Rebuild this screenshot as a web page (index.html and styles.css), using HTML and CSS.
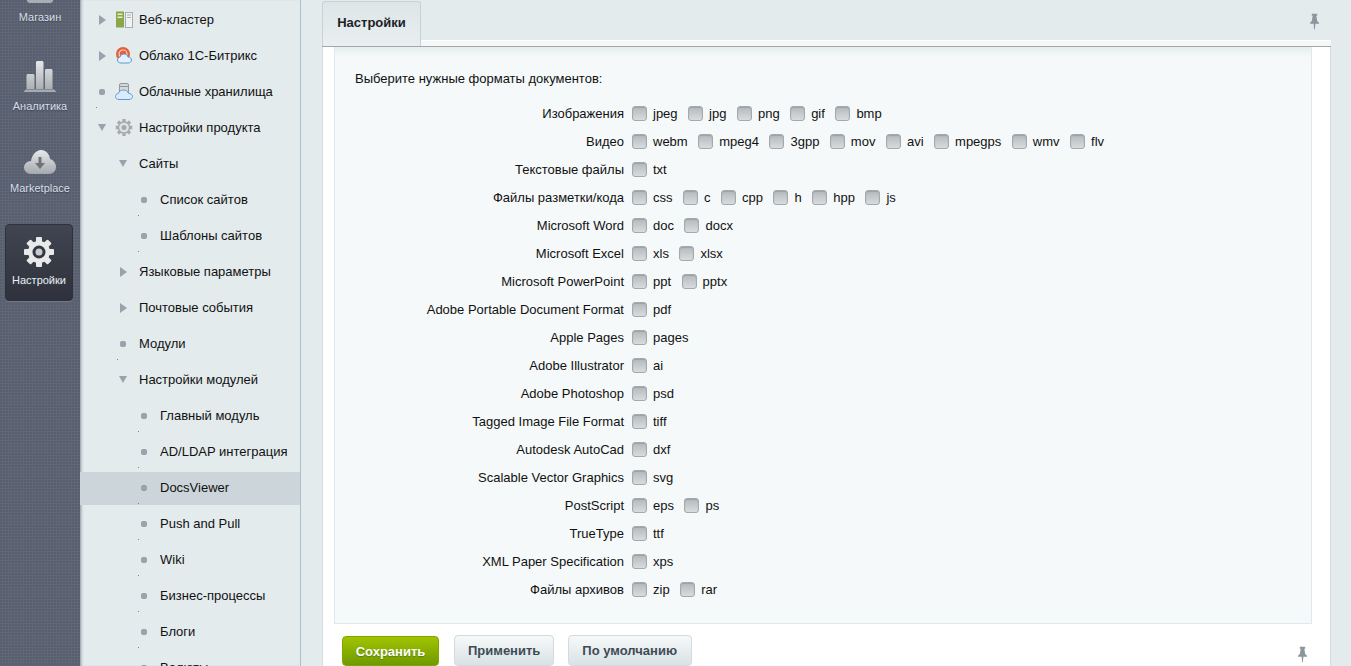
FILE: index.html
```html
<!DOCTYPE html>
<html lang="ru">
<head>
  <meta charset="UTF-8" />
  <title>Настройки - DocsViewer</title>
  <link rel="stylesheet" href="styles.css">
</head>
<body>
  <svg class="defs" width="0" height="0" aria-hidden="true">
    <defs>
      <linearGradient id="iconGrey" x1="0" y1="0" x2="0" y2="1">
        <stop offset="0" stop-color="#e6e8e9" />
        <stop offset="1" stop-color="#a4a9ae" />
      </linearGradient>
      <symbol id="pin" viewBox="0 0 10 17">
        <path d="M2 0h6v2H7l1 6 2 2v1H6l-.6 6h-.8L4 11H0v-1l2-2 1-6H2z" fill="#8b979c" />
      </symbol>
      <symbol id="gear" viewBox="0 0 30 30">
        <g fill="currentColor">
          <rect x="12" y="0" width="6" height="30" rx="1" />
          <rect x="12" y="0" width="6" height="30" rx="1" transform="rotate(45 15 15)" />
          <rect x="12" y="0" width="6" height="30" rx="1" transform="rotate(90 15 15)" />
          <rect x="12" y="0" width="6" height="30" rx="1" transform="rotate(135 15 15)" />
          <circle cx="15" cy="15" r="11" />
        </g>
      </symbol>
    </defs>
  </svg>

  <div class="layout">
    <aside class="sidebar">
      <a class="nav-item">
        <svg class="nav-shop" viewBox="0 0 26 3"><path d="M0 0h26c0 2-1 3-3 3H3C1 3 0 2 0 0z" fill="#a9aeb3" /></svg>
        <span>Магазин</span>
      </a>
      <a class="nav-item">
        <svg class="nav-chart" viewBox="0 0 32 31">
          <path d="M2.500 14.500c0-.8.600-1.500 1.500-1.500h5c.8 0 1.500.7 1.500 1.500V28h-8zM12 1.500c0-.8.600-1.500 1.500-1.500h4.500c.8 0 1.500.7 1.500 1.500V28H12zM21 9.500c0-.8.600-1.500 1.500-1.500H27c.8 0 1.500.7 1.500 1.500V28H21zM2 28.500h28l1.800 1.500c.4.500.2 1-.3 1H.5c-.5 0-.7-.5-.3-1z" fill="url(#iconGrey)" />
        </svg>
        <span>Аналитика</span>
      </a>
      <a class="nav-item">
        <svg class="nav-cloud" viewBox="0 0 32 24">
          <path d="M7 24C3 24 0 21 0 17.500S3 11 7 11C8 5 12 0 17 0c5 0 8.500 4 9 9 3.500 1 6 4 6 8 0 4-3 7-7 7z" fill="url(#iconGrey)" />
          <path d="M14.500 7h3v6H21l-5 6-5-6h3.500z" fill="#6f747b" />
        </svg>
        <span>Marketplace</span>
      </a>
      <a class="nav-item nav-active">
        <svg class="nav-gear" viewBox="0 0 30 30"><use href="#gear" width="30" height="30" /><circle cx="15" cy="15" r="6.500" fill="#343743" /><circle cx="15" cy="15" r="3.500" fill="#c9ccce" /></svg>
        <span>Настройки</span>
      </a>
    </aside>

    <nav class="menu">
      <div class="menu-row lvl1"><i class="arrow-r"></i>
        <svg class="menu-icon" viewBox="0 0 18 16">
          <rect x="1" y="0" width="8" height="16" fill="#8aa84a" />
          <rect x="2.500" y="2" width="5" height="1.500" fill="#e4efc8" />
          <rect x="2.500" y="5" width="5" height="1.500" fill="#e4efc8" />
          <rect x="10.500" y="1" width="7" height="15" fill="#f1f3f3" stroke="#a6adb0" />
          <rect x="12" y="3" width="4" height="1" fill="#a6adb0" />
          <rect x="12" y="5.500" width="4" height="1" fill="#a6adb0" />
        </svg>
        <span>Веб-кластер</span></div>
      <div class="menu-row lvl1"><i class="arrow-r"></i>
        <svg class="menu-icon" viewBox="0 0 18 17">
          <circle cx="8" cy="7" r="7" fill="#e2603c" />
          <circle cx="8" cy="7" r="4" fill="none" stroke="#f6d6ca" stroke-width="1.200" />
          <path d="M6 16c-2.500 0-3.500-1.500-3.500-3s1-2.800 2.600-3c.5-2 2-3 3.900-3 2 0 3.500 1.200 4 3 2 0 3.500 1.300 3.500 3s-1.300 3-3.500 3z" fill="#e4f0fb" stroke="#5b9ad6" />
        </svg>
        <span>Облако 1С-Битрикс</span></div>
      <div class="menu-row lvl1 leaf"><i class="bullet"></i>
        <svg class="menu-icon" viewBox="0 0 18 17">
          <rect x="4.500" y="0.500" width="9" height="10" rx="1.500" fill="#d5d9db" stroke="#8f979b" />
          <rect x="5" y="3" width="8" height="1" fill="#8f979b" />
          <path d="M4 16.500c-2.300 0-3.500-1.500-3.500-3s1-2.800 2.800-3c.6-2 2.700-3.500 5.200-3.500s4.600 1.300 5.200 3.500c2 0 3.800 1.300 3.800 3s-1.500 3-3.500 3z" fill="#dcebf9" stroke="#5b9ad6" />
        </svg>
        <span>Облачные хранилища</span></div>
      <div class="menu-row lvl1"><i class="arrow-d"></i>
        <svg class="menu-icon menu-gear" viewBox="0 0 30 30"><use href="#gear" width="30" height="30" /><circle cx="15" cy="15" r="8.500" fill="#dfe3e4" /><circle cx="15" cy="15" r="4.500" fill="#a5abaf" /></svg>
        <span>Настройки продукта</span></div>
      <div class="menu-row lvl2"><i class="arrow-d"></i><span>Сайты</span></div>
      <div class="menu-row lvl3 leaf"><i class="bullet"></i><span>Список сайтов</span></div>
      <div class="menu-row lvl3 leaf"><i class="bullet"></i><span>Шаблоны сайтов</span></div>
      <div class="menu-row lvl2"><i class="arrow-r"></i><span>Языковые параметры</span></div>
      <div class="menu-row lvl2"><i class="arrow-r"></i><span>Почтовые события</span></div>
      <div class="menu-row lvl2 leaf"><i class="bullet"></i><span>Модули</span></div>
      <div class="menu-row lvl2"><i class="arrow-d"></i><span>Настройки модулей</span></div>
      <div class="menu-row lvl3 leaf"><i class="bullet"></i><span>Главный модуль</span></div>
      <div class="menu-row lvl3 leaf"><i class="bullet"></i><span>AD/LDAP интеграция</span></div>
      <div class="menu-row lvl3 leaf selected"><i class="bullet"></i><span>DocsViewer</span></div>
      <div class="menu-row lvl3 leaf"><i class="bullet"></i><span>Push and Pull</span></div>
      <div class="menu-row lvl3 leaf"><i class="bullet"></i><span>Wiki</span></div>
      <div class="menu-row lvl3 leaf"><i class="bullet"></i><span>Бизнес-процессы</span></div>
      <div class="menu-row lvl3 leaf"><i class="bullet"></i><span>Блоги</span></div>
      <div class="menu-row lvl3 leaf"><i class="bullet"></i><span>Валюты</span></div>
    </nav>

    <main class="main">
      <div class="tabs">
        <div class="tab">Настройки</div>
        <svg class="pin"><use href="#pin" /></svg>
      </div>
      <div class="panel">
        <div class="formats">
          <p class="formats-title">Выберите нужные форматы документов:</p>

          <div class="row"><div class="row-label">Изображения</div><div class="opts">
            <label class="opt"><i class="check"></i>jpeg</label><label class="opt"><i class="check"></i>jpg</label><label class="opt"><i class="check"></i>png</label><label class="opt"><i class="check"></i>gif</label><label class="opt"><i class="check"></i>bmp</label>
          </div></div>
          <div class="row"><div class="row-label">Видео</div><div class="opts">
            <label class="opt"><i class="check"></i>webm</label><label class="opt"><i class="check"></i>mpeg4</label><label class="opt"><i class="check"></i>3gpp</label><label class="opt"><i class="check"></i>mov</label><label class="opt"><i class="check"></i>avi</label><label class="opt"><i class="check"></i>mpegps</label><label class="opt"><i class="check"></i>wmv</label><label class="opt"><i class="check"></i>flv</label>
          </div></div>
          <div class="row"><div class="row-label">Текстовые файлы</div><div class="opts">
            <label class="opt"><i class="check"></i>txt</label>
          </div></div>
          <div class="row"><div class="row-label">Файлы разметки/кода</div><div class="opts">
            <label class="opt"><i class="check"></i>css</label><label class="opt"><i class="check"></i>c</label><label class="opt"><i class="check"></i>cpp</label><label class="opt"><i class="check"></i>h</label><label class="opt"><i class="check"></i>hpp</label><label class="opt"><i class="check"></i>js</label>
          </div></div>
          <div class="row"><div class="row-label">Microsoft Word</div><div class="opts">
            <label class="opt"><i class="check"></i>doc</label><label class="opt"><i class="check"></i>docx</label>
          </div></div>
          <div class="row"><div class="row-label">Microsoft Excel</div><div class="opts">
            <label class="opt"><i class="check"></i>xls</label><label class="opt"><i class="check"></i>xlsx</label>
          </div></div>
          <div class="row"><div class="row-label">Microsoft PowerPoint</div><div class="opts">
            <label class="opt"><i class="check"></i>ppt</label><label class="opt"><i class="check"></i>pptx</label>
          </div></div>
          <div class="row"><div class="row-label">Adobe Portable Document Format</div><div class="opts">
            <label class="opt"><i class="check"></i>pdf</label>
          </div></div>
          <div class="row"><div class="row-label">Apple Pages</div><div class="opts">
            <label class="opt"><i class="check"></i>pages</label>
          </div></div>
          <div class="row"><div class="row-label">Adobe Illustrator</div><div class="opts">
            <label class="opt"><i class="check"></i>ai</label>
          </div></div>
          <div class="row"><div class="row-label">Adobe Photoshop</div><div class="opts">
            <label class="opt"><i class="check"></i>psd</label>
          </div></div>
          <div class="row"><div class="row-label">Tagged Image File Format</div><div class="opts">
            <label class="opt"><i class="check"></i>tiff</label>
          </div></div>
          <div class="row"><div class="row-label">Autodesk AutoCad</div><div class="opts">
            <label class="opt"><i class="check"></i>dxf</label>
          </div></div>
          <div class="row"><div class="row-label">Scalable Vector Graphics</div><div class="opts">
            <label class="opt"><i class="check"></i>svg</label>
          </div></div>
          <div class="row"><div class="row-label">PostScript</div><div class="opts">
            <label class="opt"><i class="check"></i>eps</label><label class="opt"><i class="check"></i>ps</label>
          </div></div>
          <div class="row"><div class="row-label">TrueType</div><div class="opts">
            <label class="opt"><i class="check"></i>ttf</label>
          </div></div>
          <div class="row"><div class="row-label">XML Paper Specification</div><div class="opts">
            <label class="opt"><i class="check"></i>xps</label>
          </div></div>
          <div class="row"><div class="row-label">Файлы архивов</div><div class="opts">
            <label class="opt"><i class="check"></i>zip</label><label class="opt"><i class="check"></i>rar</label>
          </div></div>
        </div>

        <div class="actions">
          <button class="btn btn-save">Сохранить</button>
          <button class="btn">Применить</button>
          <button class="btn btn-default">По умолчанию</button>
          <svg class="pin pin-bottom"><use href="#pin" /></svg>
        </div>
      </div>
    </main>
  </div>
</body>
</html>
```

FILE: styles.css
```css
html, body {
  margin: 0;
  padding: 0;
  height: 100%;
  overflow: hidden;
}

body {
  font-family: "Liberation Sans", Arial, sans-serif;
  font-size: 13px;
  color: #111;
  background: #e3ebed;
}

.defs { position: absolute; }

.layout {
  display: flex;
  height: 666px;
  overflow: hidden;
}

/* left dark column */
.sidebar {
  width: 80px;
  flex: none;
  display: flex;
  flex-direction: column;
  align-items: center;
  gap: 38px;
  background-color: #5f6676;
  background-image: radial-gradient(circle at 1px 1px, #585e6d 1px, transparent 1px);
  background-size: 3px 3px;
}

.nav-item {
  display: flex;
  flex-direction: column;
  align-items: center;
  gap: 8px;
  font-size: 11px;
  line-height: 12px;
  color: #d5dfe8;
  text-shadow: 0 1px 1px #3f4450;
}

.nav-item svg { display: block; }
.nav-shop { width: 26px; height: 3px; }
.nav-chart { width: 32px; height: 31px; }
.nav-cloud { width: 32px; height: 24px; }
.nav-gear { width: 30px; height: 30px; color: #e8eaea; }

.nav-active {
  align-self: flex-start;
  width: 68px;
  height: 77px;
  box-sizing: border-box;
  margin: -8px 0 0 5px;
  padding-top: 12px;
  gap: 7px;
  border: 1px solid #2f323c;
  border-radius: 4px;
  background: linear-gradient(#414551, #2f323c);
  color: #e8eef3;
  box-shadow: 0 1px 0 #6f7685;
}

/* tree menu */
.menu {
  width: 220px;
  flex: none;
  box-sizing: border-box;
  padding-top: 4px;
  display: flex;
  flex-direction: column;
  gap: 3px;
  background: #e3ebed;
  box-shadow: inset 3px 0 3px -2px #8a909c;
}

.menu-row {
  height: 33px;
  flex: none;
  box-sizing: border-box;
  padding-bottom: 2px;
  display: flex;
  align-items: center;
  position: relative;
  color: #111;
}

.menu-row.lvl1 { padding-left: 19px; }
.menu-row.lvl2 { padding-left: 40px; }
.menu-row.lvl3 { padding-left: 61px; }

.menu-row > span { margin-left: 12px; }
.menu-row > .menu-icon + span { margin-left: 6px; }

.menu-row.selected { background: #ccd5da; }

/* the tiny speck under every leaf row */
.menu-row.leaf::after {
  content: "";
  position: absolute;
  top: 31px;
  width: 1px;
  height: 1px;
  background: #7f8a90;
}
.menu-row.lvl1.leaf::after { left: 16px; }
.menu-row.lvl2.leaf::after { left: 37px; }
.menu-row.lvl3.leaf::after { left: 58px; }

.arrow-r, .arrow-d, .bullet { flex: none; display: block; }

.arrow-r {
  width: 0;
  height: 0;
  border-left: 7px solid #98a3ad;
  border-top: 5px solid transparent;
  border-bottom: 5px solid transparent;
}

.arrow-d {
  width: 0;
  height: 0;
  border-top: 7px solid #98a3ad;
  border-left: 4px solid transparent;
  border-right: 4px solid transparent;
  margin-left: -1px;
}

.bullet {
  width: 6px;
  height: 6px;
  margin-right: 1px;
  border-radius: 2px;
  background: #9aa3ad;
}

.menu-icon {
  flex: none;
  width: 18px;
  height: 17px;
  margin-left: 9px;
}

.menu-gear { color: #a5abaf; }

/* right side */
.main {
  flex: 1;
  min-width: 0;
  padding-left: 21px;
  padding-right: 20px;
  border-left: 1px solid #a9bfd0;
}

.tabs {
  height: 40px;
  padding-top: 1px;
  box-sizing: border-box;
  display: flex;
  align-items: flex-start;
  justify-content: space-between;
}

/* the tab runs down over the light strip, to the grey line */
.tab {
  position: relative;
  z-index: 1;
  flex: none;
  width: 99px;
  height: 45px;
  box-sizing: border-box;
  border: 1px solid #c8d1d5;
  border-bottom: 0;
  border-radius: 3px 3px 0 0;
  background: linear-gradient(#dde5e7, #e9eff0);
  text-align: center;
  font-weight: bold;
  line-height: 42px;
  color: #1c2226;
}

.pin {
  width: 9px;
  height: 17px;
  margin: 12px 12px 0 0;
}

.panel {
  position: relative;
  height: 626px;
  box-sizing: border-box;
  padding: 7px 18px 0 11px;
  background: #fff;
  border-left: 1px solid #d3dcdf;
  border-right: 1px solid #d3dcdf;
}

.panel::before {
  content: "";
  position: absolute;
  left: -1px;
  right: -1px;
  top: 0;
  height: 5px;
  background: #f6f8f8;
  border-top: 1px solid #fff;
  border-bottom: 1px solid #a0a8ab;
}

.formats {
  height: 577px;
  box-sizing: border-box;
  padding: 24px 0 0 20px;
  border: 1px solid #dfe8ec;
  border-top: 0;
  background: linear-gradient(#e6eeee, #f5f9f9 10px);
}

.formats-title {
  margin: 0 0 12px;
  line-height: 16px;
}

.row {
  display: flex;
  align-items: center;
  height: 28px;
}

.row-label {
  width: 269px;
  flex: none;
  text-align: right;
}

.opts {
  display: flex;
  margin-left: 8px;
  gap: 10.500px;
}

.opt {
  display: flex;
  align-items: center;
  gap: 5px;
}

.check {
  display: block;
  width: 13px;
  height: 13px;
  margin: 0 1px 0 0;
  border: 1px solid #a3a9ad;
  border-radius: 3px;
  background: linear-gradient(#b4b9bc, #d9dcde);
  box-shadow: inset 0 1px 1px #9ca2a6;
}

.actions {
  display: flex;
  align-items: flex-start;
  padding: 11px 0 0 8px;
  gap: 14px;
}

.btn {
  height: 31px;
  padding: 0 13px;
  font: bold 13px "Liberation Sans", Arial, sans-serif;
  color: #3f4b54;
  border: 1px solid #d3dbdf;
  border-radius: 4px;
  background: linear-gradient(#f6f9f9, #d9e2e6);
}

.btn-default { padding-right: 14px; }

.btn-save {
  width: 97px;
  padding: 0;
  margin: 1px 1px 0 0;
  height: 30px;
  color: #fff;
  border: 1px solid #7fa600;
  background: linear-gradient(#a0c400, #6f9a00);
  text-shadow: 0 1px 1px #5d8000;
}

.pin-bottom {
  margin: 11px 5px 0 auto;
}
```
